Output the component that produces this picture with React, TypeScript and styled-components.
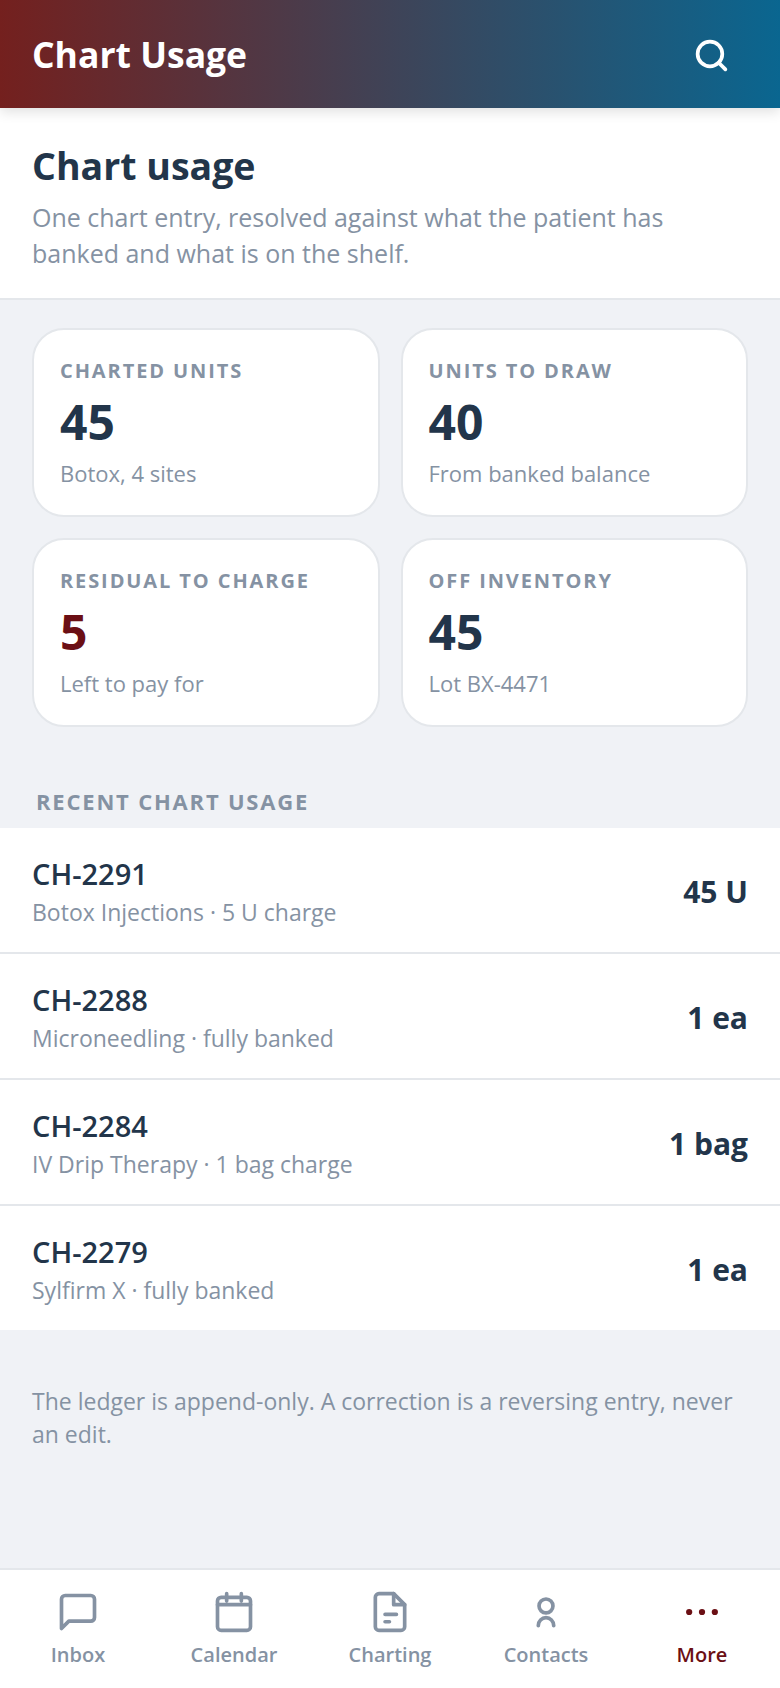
import { FC, ReactNode } from "react";
import styled, { createGlobalStyle } from "styled-components";

const GlobalStyle = createGlobalStyle`
  * {
    box-sizing: border-box;
  }

  body {
    margin: 0;
    background: #f0f2f6;
    font-family: "Open Sans", "Liberation Sans", sans-serif;
    color: #22354a;
  }
`;

interface IStat {
  label: string;
  value: string;
  note: string;
  accent?: boolean;
}

interface IUsage {
  id: string;
  detail: string;
  amount: string;
}

const stats: IStat[] = [
  { label: "CHARTED UNITS", value: "45", note: "Botox, 4 sites" },
  { label: "UNITS TO DRAW", value: "40", note: "From banked balance" },
  { label: "RESIDUAL TO CHARGE", value: "5", note: "Left to pay for", accent: true },
  { label: "OFF INVENTORY", value: "45", note: "Lot BX-4471" },
];

const usages: IUsage[] = [
  { id: "CH-2291", detail: "Botox Injections · 5 U charge", amount: "45 U" },
  { id: "CH-2288", detail: "Microneedling · fully banked", amount: "1 ea" },
  { id: "CH-2284", detail: "IV Drip Therapy · 1 bag charge", amount: "1 bag" },
  { id: "CH-2279", detail: "Sylfirm X · fully banked", amount: "1 ea" },
];

const Icon: FC<{ children: ReactNode }> = ({ children }) => (
  <NavSvg viewBox="0 0 24 24" fill="none" stroke="currentColor" strokeWidth="2" strokeLinecap="round" strokeLinejoin="round">
    {children}
  </NavSvg>
);

const navItems: { label: string; icon: ReactNode; active?: boolean }[] = [
  { label: "Inbox", icon: <path d="M21 15a2 2 0 0 1-2 2H7l-4 4V5a2 2 0 0 1 2-2h14a2 2 0 0 1 2 2z" /> },
  {
    label: "Calendar",
    icon: (
      <>
        <rect x="3" y="4" width="18" height="18" rx="2" />
        <path d="M16 2v4M8 2v4M3 8h18" />
      </>
    ),
  },
  {
    label: "Charting",
    icon: (
      <>
        <path d="M14 2H6a2 2 0 0 0-2 2v16a2 2 0 0 0 2 2h12a2 2 0 0 0 2-2V8z" />
        <path d="M14 2v6h6M9.3 13.3h6.2M9.3 17.3h2.4" />
      </>
    ),
  },
  {
    label: "Contacts",
    icon: (
      <>
        <circle cx="12" cy="8.7" r="3.8" />
        <path d="M7.8 19.5v-.2a4.2 4.2 0 0 1 8.4 0v.2" />
      </>
    ),
  },
  {
    label: "More",
    active: true,
    icon: (
      <g fill="currentColor" stroke="none">
        <circle cx="5" cy="12" r="1.7" />
        <circle cx="12" cy="12" r="1.7" />
        <circle cx="19" cy="12" r="1.7" />
      </g>
    ),
  },
];

const App: FC = () => {
  return (
    <Screen>
      <GlobalStyle />
      <Header>
        <HeaderTitle>Chart Usage</HeaderTitle>
        <SearchButton aria-label="search">
          <svg width="37" height="37" viewBox="0 0 24 24" fill="none" stroke="currentColor" strokeWidth="2.4" strokeLinecap="round" strokeLinejoin="round">
            <circle cx="11" cy="11" r="8" />
            <path d="m21 21-4.3-4.3" />
          </svg>
        </SearchButton>
      </Header>

      <Main>
        <Intro>
          <IntroTitle>Chart usage</IntroTitle>
          <IntroText>One chart entry, resolved against what the patient has banked and what is on the shelf.</IntroText>
        </Intro>

        <StatGrid>
          {stats.map((stat) => (
            <StatCard key={stat.label}>
              <StatLabel>{stat.label}</StatLabel>
              <StatValue $accent={stat.accent}>{stat.value}</StatValue>
              <StatNote>{stat.note}</StatNote>
            </StatCard>
          ))}
        </StatGrid>

        <SectionLabel>RECENT CHART USAGE</SectionLabel>
        <UsageList>
          {usages.map((usage) => (
            <UsageRow key={usage.id}>
              <div>
                <UsageId>{usage.id}</UsageId>
                <UsageDetail>{usage.detail}</UsageDetail>
              </div>
              <UsageAmount>{usage.amount}</UsageAmount>
            </UsageRow>
          ))}
        </UsageList>

        <Footnote>The ledger is append-only. A correction is a reversing entry, never an edit.</Footnote>
      </Main>

      <BottomNav>
        {navItems.map((item) => (
          <NavItem key={item.label} $active={item.active}>
            <Icon>{item.icon}</Icon>
            <span>{item.label}</span>
          </NavItem>
        ))}
      </BottomNav>
    </Screen>
  );
};

const Screen = styled.div`
  width: 780px;
  height: 1688px;
  display: flex;
  flex-direction: column;
  overflow: hidden;
  background: #f0f2f6;
`;

const Header = styled.header`
  position: relative;
  z-index: 1;
  height: 108px;
  flex: none;
  display: flex;
  align-items: center;
  justify-content: space-between;
  padding: 0 32px;
  background: linear-gradient(90deg, #74201e 0%, #0a6690 100%);
  box-shadow: 0 4px 12px rgba(0, 0, 0, 0.12);
`;

const HeaderTitle = styled.h1`
  margin: 0;
  font-size: 35.5px;
  font-weight: 700;
  color: #fff;
`;

const SearchButton = styled.button`
  width: 74px;
  display: flex;
  justify-content: center;
  padding: 2px 0 0;
  border: 0;
  background: none;
  color: #fff;
`;

const Main = styled.main`
  flex: 1;
`;

const Intro = styled.section`
  padding: 33px 32px 27px;
  background: #fff;
  border-bottom: 2px solid #e4e7eb;
`;

const IntroTitle = styled.h2`
  margin: 0 0 8px;
  font-size: 37.5px;
  line-height: 50px;
  font-weight: 700;
  color: #22354a;
`;

const IntroText = styled.p`
  margin: 0;
  font-size: 25px;
  line-height: 36px;
  color: #8592a3;
`;

const StatGrid = styled.div`
  display: grid;
  grid-template-columns: 1fr 1fr;
  gap: 21px;
  padding: 28px 32px 0;
`;

const StatCard = styled.div`
  padding: 28px 26px 27px;
  background: #fff;
  border: 2px solid #e4e7eb;
  border-radius: 32px;
`;

const StatLabel = styled.div`
  font-size: 20px;
  line-height: 26px;
  font-weight: 700;
  letter-spacing: 1.9px;
  color: #8592a3;
`;

const StatValue = styled.div<{ $accent?: boolean }>`
  margin: 8px 0 6px;
  font-size: 48px;
  line-height: 60px;
  font-weight: 700;
  color: ${(props) => (props.$accent ? "#6b0f14" : "#22354a")};
`;

const StatNote = styled.div`
  font-size: 22px;
  line-height: 30px;
  color: #8592a3;
`;

const SectionLabel = styled.h3`
  margin: 0;
  padding: 60px 36px 13px;
  font-size: 22px;
  line-height: 28px;
  font-weight: 700;
  letter-spacing: 1.8px;
  color: #8592a3;
`;

const UsageList = styled.div`
  background: #fff;
`;

const UsageRow = styled.div`
  height: 126px;
  display: flex;
  align-items: center;
  justify-content: space-between;
  padding: 2px 32px 0;
  border-bottom: 2px solid #e4e7eb;

  &:last-child {
    height: 124px;
    border-bottom: 0;
  }
`;

const UsageId = styled.div`
  font-size: 29px;
  line-height: 38px;
  font-weight: 600;
  color: #22354a;
`;

const UsageDetail = styled.div`
  margin-top: 3px;
  font-size: 23px;
  line-height: 32px;
  color: #8592a3;
`;

const UsageAmount = styled.div`
  font-size: 30px;
  font-weight: 700;
  color: #22354a;
`;

const Footnote = styled.p`
  margin: 0;
  padding: 55px 32px 0;
  font-size: 23px;
  line-height: 33.4px;
  color: #8592a3;
`;

const BottomNav = styled.nav`
  height: 120px;
  flex: none;
  display: grid;
  grid-template-columns: repeat(5, 1fr);
  padding-top: 20px;
  background: #fff;
  border-top: 2px solid #e4e7eb;
`;

const NavItem = styled.div<{ $active?: boolean }>`
  display: flex;
  flex-direction: column;
  align-items: center;
  gap: 7px;
  font-size: 20px;
  line-height: 28px;
  font-weight: 600;
  color: ${(props) => (props.$active ? "#6b0f14" : "#8592a3")};
`;

const NavSvg = styled.svg`
  width: 44px;
  height: 44px;
`;

export default App;
